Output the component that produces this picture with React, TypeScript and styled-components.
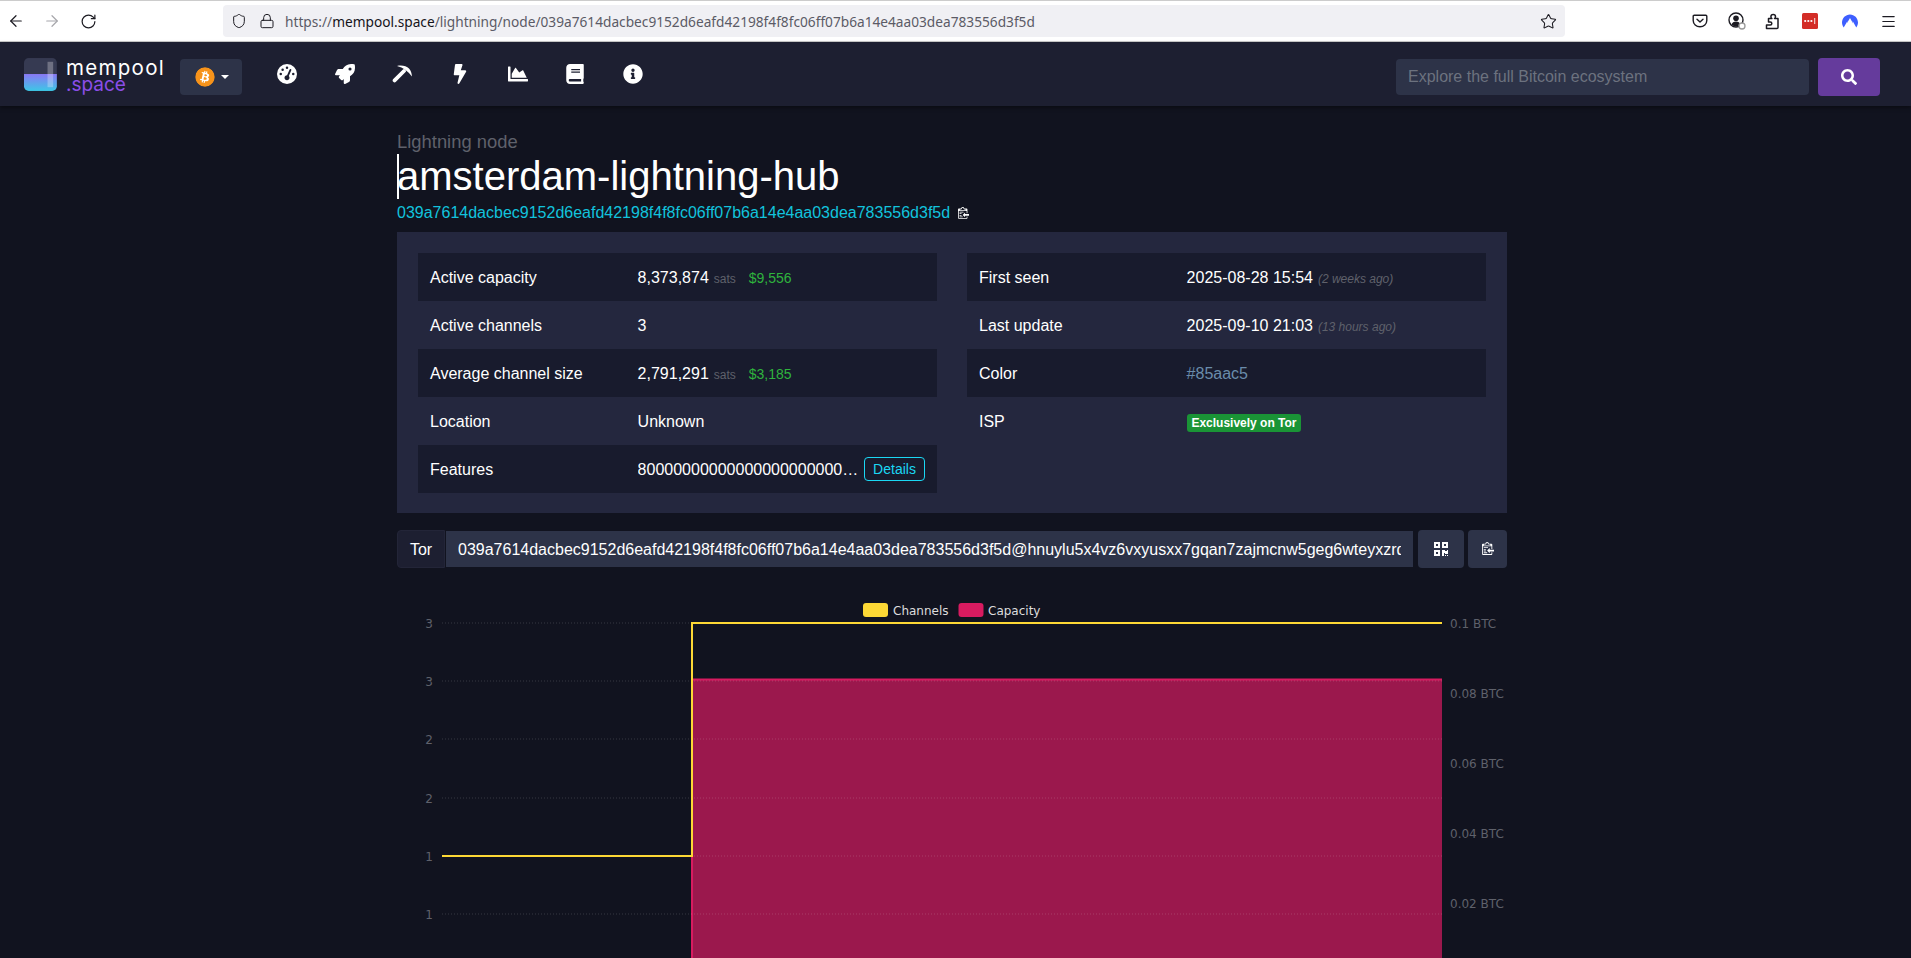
import { ArrowLeft, ArrowRight, Lock, Menu, RotateCw, Shield, Star } from "lucide-react";
import { FaBitcoin, FaBolt, FaBook, FaChartArea, FaInfoCircle, FaQrcode, FaRocket, FaSearch } from "react-icons/fa";
import { FaGaugeHigh } from "react-icons/fa6";
import styled, { createGlobalStyle } from "styled-components";

const GlobalStyle = createGlobalStyle`
    html, body {
        margin: 0;
        height: 958px;
        overflow: hidden;
        background: #11131f;
        color: #fff;
        font-family: "Liberation Sans", Arial, sans-serif;
        font-size: 16px;
    }
    * { box-sizing: border-box; }
`

/* browser chrome */
const BrowserBar = styled.div`
    height: 42px;
    display: flex;
    align-items: center;
    background: #fff;
    border-top: 1px solid #ccc;
    border-bottom: 1px solid #ccc;
    color: #1c1b22;
`

const ToolSlot = styled.div<{ $w?: number }>`
    width: ${p => p.$w ?? 32}px;
    flex-shrink: 0;
    display: flex;
    justify-content: center;
    align-items: center;
`

const NavButtons = styled.div`
    display: flex;
    gap: 4px;
`

const UrlBar = styled.div`
    margin-left: 119px;
    width: 1342px;
    height: 32px;
    border-radius: 4px;
    background: #f0f0f4;
    display: flex;
    align-items: center;
    padding: 0 8px;
`

const UrlIcons = styled.div`
    display: flex;
    align-items: center;
    gap: 12px;
    width: 54px;
    flex-shrink: 0;
`

const UrlText = styled.div`
    flex: 1;
    font-family: "Noto Sans", sans-serif;
    font-size: 13.7px;
    color: #5b5b66;
    white-space: nowrap;

    b {
        font-weight: 400;
        color: #15141a;
    }
`

const ExtensionIcons = styled.div`
    margin-left: auto;
    margin-right: 5px;
    display: flex;
`

/* site navigation */
const TopNav = styled.nav`
    height: 64px;
    display: flex;
    align-items: center;
    background: #1d1f31;
    padding: 0 31px 0 24px;
    box-shadow: 0 2px 4px rgba(0, 0, 0, 0.4);
    position: relative;
`

const Brand = styled.div`
    display: flex;
    align-items: center;
    gap: 9px;
    width: 141px;
    flex-shrink: 0;
`

const BrandText = styled.div`
    display: flex;
    flex-direction: column;
    padding-top: 3px;
    font-family: Inter, sans-serif;
    line-height: 17px;
`

const BrandName = styled.span`
    font-size: 20.5px;
    letter-spacing: 1.3px;
`

const BrandSuffix = styled.span`
    font-size: 19px;
    color: #8b4ee8;
`

const NetworkButton = styled.button`
    margin: 6px 0 0 15px;
    width: 62px;
    height: 36px;
    background: #2d3348;
    border: none;
    border-radius: 4px;
    padding: 0 0 0 15px;
    display: flex;
    align-items: center;
    gap: 6px;

    svg {
        color: #f7931a;
        background: radial-gradient(circle, #fff 55%, transparent 56%);
        border-radius: 50%;
    }
`

const Caret = styled.span`
    border-top: 4px solid #fff;
    border-left: 4px solid transparent;
    border-right: 4px solid transparent;
`

const MenuList = styled.div`
    margin-left: 16px;
    display: flex;
`

const MenuItem = styled.div`
    width: 57.7px;
    display: flex;
    justify-content: center;
    align-items: center;
    color: #fff;
    font-size: 20px;
`

const SearchForm = styled.form`
    margin: 6px 0 0 auto;
    display: flex;
    align-items: center;
    gap: 9px;
`

const SearchInput = styled.input`
    width: 413px;
    height: 36px;
    background: #2d3348;
    border: none;
    border-radius: 4px;
    padding: 0 12px;
    color: #fff;
    font: inherit;

    &::placeholder {
        color: #6c727f;
    }
`

const SearchButton = styled.button`
    width: 62px;
    height: 38px;
    background: #653b9c;
    border: none;
    border-radius: 4px;
    color: #fff;
    font-size: 16px;
    display: flex;
    justify-content: center;
    align-items: center;
`

/* node page */
const Main = styled.main`
    width: 1110px;
    margin-left: 397px;
    padding-top: 25px;
`

const Kicker = styled.div`
    font-size: 18.4px;
    line-height: 21px;
    color: #5f616b;
`

const Title = styled.h1`
    position: relative;
    margin: 0;
    font-size: 40px;
    font-weight: 400;
    line-height: 48px;

    &::before {
        content: "";
        position: absolute;
        left: 0;
        top: 2px;
        width: 1.5px;
        height: 45px;
        background: #fff;
    }
`

const PubKey = styled.div`
    display: flex;
    align-items: center;
    gap: 8px;
    height: 24px;
    padding-top: 2px;
    color: #12c3dd;
`

const CopyMark = styled.span`
    display: flex;
    color: #fff;
`

const Box = styled.section`
    margin-top: 8px;
    background: #24273e;
    padding: 21px 21px 20px;
    display: grid;
    grid-template-columns: 1fr 1fr;
    gap: 30px;
`

const Rows = styled.div`
    display: flex;
    flex-direction: column;
`

const Row = styled.div<{ $striped?: boolean }>`
    height: 48px;
    display: grid;
    grid-template-columns: 207.6px minmax(0, 1fr);
    align-items: center;
    padding: 2px 12px 0;
    background: ${p => (p.$striped ? "#181b2d" : "transparent")};
`

const Value = styled.div`
    display: flex;
    align-items: baseline;
    white-space: nowrap;
    min-width: 0;
`

const Symbol = styled.span`
    margin-left: 5px;
    font-size: 12px;
    color: #5f616b;
`

const Fiat = styled.span`
    margin-left: 13px;
    font-size: 14px;
    color: #2fb33d;
`

const Relative = styled.i`
    margin-left: 5px;
    font-size: 12px;
    color: #5f616b;
`

const ColorLink = styled.span`
    color: #6a8cab;
`

const TorBadge = styled.span`
    font-size: 12px;
    font-weight: 700;
    line-height: 18px;
    padding: 0 4.8px;
    background: #1a9436;
    border-radius: 3px;
    margin-top: 2px;
`

const FeatureValue = styled.div`
    display: flex;
    align-items: center;
    gap: 5px;
    min-width: 0;
    margin-top: -2px;
`

const FeatureBits = styled.span`
    flex: 1;
    min-width: 0;
    padding-top: 2px;
    overflow: hidden;
    text-overflow: ellipsis;
    white-space: nowrap;
`

const DetailsButton = styled.button`
    flex-shrink: 0;
    width: 61px;
    height: 24px;
    padding: 0;
    background: transparent;
    border: 1px solid #1bd8f4;
    border-radius: 4px;
    color: #1bd8f4;
    font: inherit;
    font-size: 14px;
`

const SocketRow = styled.div`
    margin-top: 17px;
    height: 38px;
    display: flex;
    align-items: center;
`

const SocketLabel = styled.div`
    width: 48px;
    height: 38px;
    padding-top: 2px;
    display: flex;
    justify-content: center;
    align-items: center;
    background: #1d1f31;
    border: 1px solid #232538;
    border-radius: 4px 0 0 4px;
`

const SocketInput = styled.input`
    margin-left: 1px;
    width: 967px;
    height: 36px;
    background: #2d3348;
    border: none;
    padding: 2px 12px 0;
    color: #fff;
    font: inherit;
`

const SocketButton = styled.button<{ $w: number }>`
    margin-left: ${p => (p.$w === 46 ? 5 : 4)}px;
    width: ${p => p.$w}px;
    height: 38px;
    background: #2d3348;
    border: none;
    border-radius: 4px;
    color: #fff;
    font-size: 16px;
    padding: 0;
    display: flex;
    justify-content: center;
    align-items: center;
`

const ChartSvg = styled.svg`
    display: block;
    margin-top: 22px;
    font-family: "DejaVu Sans", sans-serif;
    font-size: 12px;
`

const ClippyIcon = ({ size = 12 }: { size?: number }) => (
    <svg width={size} height={size * 1.15} viewBox="0 0 896 1024" fill="currentColor">
        <path d="M128 768h256v64H128v-64z m320-384H128v64h320v-64z m128 192V448L384 640l192 192V704h320V576H576z m-288-64H128v64h160v-64z M128 704h160v-64H128v64z m576 64h64v128c-1 18-7 33-19 45s-27 18-45 19H64c-35 0-64-29-64-64V192c0-35 29-64 64-64h192C256 57 313 0 384 0s128 57 128 128h192c35 0 64 29 64 64v320h-64V320H64v576h640V768z M128 256h512c0-35-29-64-64-64h-64c-35 0-64-29-64-64s-29-64-64-64-64 29-64 64-29 64-64 64h-64c-35 0-64 29-64 64z" />
    </svg>
)

const PickIcon = () => (
    <svg width="20" height="18" viewBox="0 0 20 18" fill="currentColor">
        <path d="M5 1C9.500-.2 14.500 1 17 3.500c2 2 2.800 5 2.900 8L17 8l-3.500-3C11 3 8 1.800 5 1z" />
        <path d="M2.600 15.400L12 6" fill="none" stroke="currentColor" strokeWidth="3.800" strokeLinecap="round" />
    </svg>
)

const MempoolLogo = () => (
    <svg width="35" height="35" viewBox="0 0 35 35">
        <defs>
            <linearGradient id="logoFill" x1="0" y1="0" x2="0" y2="1">
                <stop offset="0" stopColor="#8a78f5" />
                <stop offset="1" stopColor="#3cc8e6" />
            </linearGradient>
            <clipPath id="logoClip">
                <rect width="35" height="35" rx="5" />
            </clipPath>
        </defs>
        <g clipPath="url(#logoClip)">
            <rect width="35" height="18" fill="#363a52" />
            <rect y="17" width="35" height="18" fill="url(#logoFill)" />
            <rect x="25" y="4" width="6" height="27" fill="#fff" opacity="0.28" />
        </g>
    </svg>
)

const PocketIcon = () => (
    <svg width="16" height="16" viewBox="0 0 16 16" fill="none" stroke="currentColor" strokeWidth="1.4" strokeLinejoin="round" strokeLinecap="round">
        <path d="M2.200 2.200h11.600c.6 0 1 .4 1 1v4.200c0 3.600-3 6.300-6.800 6.300S1.200 11 1.200 7.400V3.200c0-.6.4-1 1-1z" />
        <path d="M5 6.200l3 2.900 3-2.900" />
    </svg>
)

const AccountIcon = () => (
    <svg width="18" height="18" viewBox="0 0 18 18">
        <circle cx="8" cy="8" r="7" fill="none" stroke="currentColor" strokeWidth="1.4" />
        <circle cx="8" cy="6.200" r="2.800" fill="currentColor" />
        <path d="M3.500 12.600c.6-2 2.400-3 4.500-3s3.900 1 4.500 3c-1.200 1.200-2.800 1.900-4.500 1.900s-3.300-.7-4.500-1.900z" fill="currentColor" />
        <circle cx="14" cy="14" r="3" fill="#fff" stroke="#9a9a9a" strokeWidth="1.300" />
    </svg>
)

const AddonIcon = () => (
    <svg width="15" height="17" viewBox="0 0 15 17" fill="none" stroke="currentColor" strokeWidth="1.500" strokeLinejoin="round">
        <path d="M1.500 15.500h10.500a1 1 0 0 0 1-1V5.500H9.500c.8-.6 1-1.200 1-1.800 0-1.300-1.100-2.200-2.300-2.200s-2.300.9-2.300 2.200c0 .6.200 1.200 1 1.800H3.500v3.500h1.800c.9 0 1.500.7 1.500 1.500s-.6 1.500-1.500 1.500H1.500z" />
    </svg>
)

const LastPassIcon = () => (
    <svg width="16" height="16" viewBox="0 0 16 16">
        <rect width="16" height="16" rx="1.500" fill="#d32d27" />
        <circle cx="3.200" cy="8" r="1.100" fill="#fff" />
        <circle cx="6.300" cy="8" r="1.100" fill="#fff" />
        <circle cx="9.400" cy="8" r="1.100" fill="#fff" />
        <rect x="12.300" y="5" width="0.900" height="6" fill="#fff" />
    </svg>
)

const NordIcon = () => (
    <svg width="16" height="14" viewBox="0 0 16 14">
        <path d="M1.700 13.500C.6 12 0 10.300 0 8.500 0 4 3.600.4 8 .4s8 3.600 8 8.100c0 1.800-.6 3.500-1.700 5L10.600 7l.5 2.400L8 4 4.800 9.500l.7-2.600z" fill="#3e5fff" />
    </svg>
)

const gridLines = [33, 91, 149, 208, 266, 324]
const leftTicks = ["3", "3", "2", "2", "1", "1"]
const rightTicks = [
    { y: 33, label: "0.1 BTC" },
    { y: 103, label: "0.08 BTC" },
    { y: 173, label: "0.06 BTC" },
    { y: 243, label: "0.04 BTC" },
    { y: 313, label: "0.02 BTC" },
]

const CapacityChart = () => (
    <ChartSvg width="1110" height="368" viewBox="0 0 1110 368">
        <rect x="295" y="89" width="750" height="279" fill="#9b184d" />
        <path d="M295 368V89.500H1045" fill="none" stroke="#d81b60" strokeWidth="2" />
        {gridLines.map(y => (
            <line key={y} x1="45" x2="1045" y1={y} y2={y} stroke="#ffffff" strokeOpacity="0.16" strokeDasharray="1 2" />
        ))}
        {gridLines.map((y, i) => (
            <text key={y} x="36" y={y + 5} textAnchor="end" fill="#5f616b">{leftTicks[i]}</text>
        ))}
        {rightTicks.map(t => (
            <text key={t.y} x="1053" y={t.y + 5} fill="#5f616b">{t.label}</text>
        ))}
        <path d="M45 266H295V33H1045" fill="none" stroke="#fdd835" strokeWidth="2" />
        <rect x="466" y="13" width="25" height="14" rx="3" fill="#fdd835" />
        <text x="496" y="25" fill="#ddd">Channels</text>
        <rect x="561.500" y="13" width="25" height="14" rx="3" fill="#d81b60" />
        <text x="591" y="25" fill="#ddd">Capacity</text>
    </ChartSvg>
)

const NodePage = () => (
    <Main>
        <Kicker>Lightning node</Kicker>
        <Title>amsterdam-lightning-hub</Title>
        <PubKey>
            039a7614dacbec9152d6eafd42198f4f8fc06ff07b6a14e4aa03dea783556d3f5d
            <CopyMark><ClippyIcon size={11} /></CopyMark>
        </PubKey>
        <Box>
            <Rows>
                <Row $striped>
                    <span>Active capacity</span>
                    <Value>8,373,874<Symbol>sats</Symbol><Fiat>$9,556</Fiat></Value>
                </Row>
                <Row>
                    <span>Active channels</span>
                    <Value>3</Value>
                </Row>
                <Row $striped>
                    <span>Average channel size</span>
                    <Value>2,791,291<Symbol>sats</Symbol><Fiat>$3,185</Fiat></Value>
                </Row>
                <Row>
                    <span>Location</span>
                    <Value>Unknown</Value>
                </Row>
                <Row $striped>
                    <span>Features</span>
                    <FeatureValue>
                        <FeatureBits>800000000000000000000000000000000000000000000000000000</FeatureBits>
                        <DetailsButton>Details</DetailsButton>
                    </FeatureValue>
                </Row>
            </Rows>
            <Rows>
                <Row $striped>
                    <span>First seen</span>
                    <Value>2025-08-28 15:54<Relative>(2 weeks ago)</Relative></Value>
                </Row>
                <Row>
                    <span>Last update</span>
                    <Value>2025-09-10 21:03<Relative>(13 hours ago)</Relative></Value>
                </Row>
                <Row $striped>
                    <span>Color</span>
                    <ColorLink>#85aac5</ColorLink>
                </Row>
                <Row>
                    <span>ISP</span>
                    <Value><TorBadge>Exclusively on Tor</TorBadge></Value>
                </Row>
            </Rows>
        </Box>
        <SocketRow>
            <SocketLabel>Tor</SocketLabel>
            <SocketInput readOnly value="039a7614dacbec9152d6eafd42198f4f8fc06ff07b6a14e4aa03dea783556d3f5d@hnuylu5x4vz6vxyusxx7gqan7zajmcnw5geg6wteyxzrdyqd.onion:9735" />
            <SocketButton $w={46}><FaQrcode /></SocketButton>
            <SocketButton $w={39}><ClippyIcon size={12} /></SocketButton>
        </SocketRow>
        <CapacityChart />
    </Main>
)

const App = () => (
    <>
        <GlobalStyle />
        <BrowserBar>
            <NavButtons>
                <ToolSlot><ArrowLeft size={18} strokeWidth={1.6} /></ToolSlot>
                <ToolSlot><ArrowRight size={18} strokeWidth={1.6} color="#a6a6ab" /></ToolSlot>
                <ToolSlot><RotateCw size={17} strokeWidth={1.7} /></ToolSlot>
            </NavButtons>
            <UrlBar>
                <UrlIcons>
                    <Shield size={16} strokeWidth={1.5} />
                    <Lock size={16} strokeWidth={1.5} />
                </UrlIcons>
                <UrlText>https://<b>mempool.space</b>/lightning/node/039a7614dacbec9152d6eafd42198f4f8fc06ff07b6a14e4aa03dea783556d3f5d</UrlText>
                <Star size={17} strokeWidth={1.5} />
            </UrlBar>
            <ExtensionIcons>
                <ToolSlot $w={40}><PocketIcon /></ToolSlot>
                <ToolSlot $w={34}><AccountIcon /></ToolSlot>
                <ToolSlot $w={36}><AddonIcon /></ToolSlot>
                <ToolSlot $w={40}><LastPassIcon /></ToolSlot>
                <ToolSlot $w={40}><NordIcon /></ToolSlot>
                <ToolSlot $w={36}><Menu size={17} strokeWidth={1.7} /></ToolSlot>
            </ExtensionIcons>
        </BrowserBar>
        <TopNav>
            <Brand>
                <MempoolLogo />
                <BrandText>
                    <BrandName>mempool</BrandName>
                    <BrandSuffix>.space</BrandSuffix>
                </BrandText>
            </Brand>
            <NetworkButton>
                <FaBitcoin size={20} />
                <Caret />
            </NetworkButton>
            <MenuList>
                <MenuItem><FaGaugeHigh /></MenuItem>
                <MenuItem><FaRocket /></MenuItem>
                <MenuItem><PickIcon /></MenuItem>
                <MenuItem><FaBolt /></MenuItem>
                <MenuItem><FaChartArea /></MenuItem>
                <MenuItem><FaBook /></MenuItem>
                <MenuItem><FaInfoCircle /></MenuItem>
            </MenuList>
            <SearchForm>
                <SearchInput placeholder="Explore the full Bitcoin ecosystem" />
                <SearchButton type="button"><FaSearch /></SearchButton>
            </SearchForm>
        </TopNav>
        <NodePage />
    </>
)

export default App;
